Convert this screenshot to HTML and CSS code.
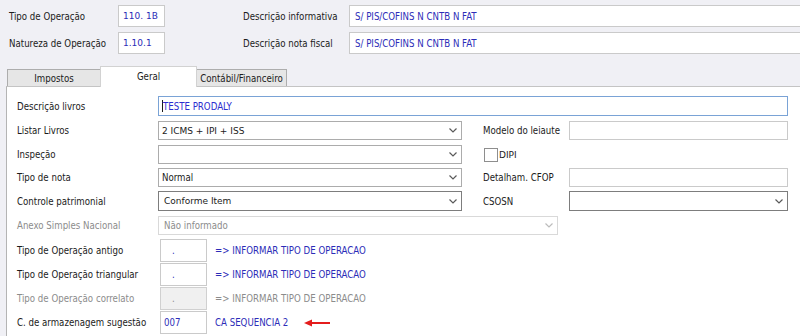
FILE: index.html
```html
<!DOCTYPE html>
<html lang="pt">
<head>
<meta charset="utf-8">
<title>Tipo de Operação</title>
<link rel="stylesheet" href="styles.css">
</head>
<body>
<div class="head">
  <div class="hrow">
    <span class="hlabel">Tipo de Operação</span>
    <div class="field code">110. 1B</div>
    <span class="hlabel2">Descrição informativa</span>
    <div class="field wide">S/ PIS/COFINS N CNTB N FAT</div>
  </div>
  <div class="hrow">
    <span class="hlabel">Natureza de Operação</span>
    <div class="field code">1.10.1</div>
    <span class="hlabel2">Descrição nota fiscal</span>
    <div class="field wide">S/ PIS/COFINS N CNTB N FAT</div>
  </div>
</div>

<div class="tabs">
  <div class="tab t1">Impostos</div>
  <div class="tab t2 active">Geral</div>
  <div class="tab t3">Contábil/Financeiro</div>
</div>

<div class="panel">
  <div class="row r1">
    <span class="lbl">Descrição livros</span>
    <div class="field focus full"><span class="caret"></span>TESTE PRODALY</div>
  </div>
  <div class="row r2">
    <span class="lbl">Listar Livros</span>
    <div class="select"><span class="alt">2 ICMS + IPI + ISS</span><svg class="chev" width="8" height="5" viewBox="0 0 8 5"><path d="M0.5 0.5 L4 4 L7.5 0.5" fill="none" stroke="#5a5a5a" stroke-width="1.2"/></svg></div>
    <span></span>
    <span class="lbl">Modelo do leiaute</span>
    <div class="field plain"></div>
  </div>
  <div class="row r3">
    <span class="lbl">Inspeção</span>
    <div class="select"><span></span><svg class="chev" width="8" height="5" viewBox="0 0 8 5"><path d="M0.5 0.5 L4 4 L7.5 0.5" fill="none" stroke="#5a5a5a" stroke-width="1.2"/></svg></div>
    <span></span>
    <label class="check"><span class="box"></span><span class="alt">DIPI</span></label>
  </div>
  <div class="row r4">
    <span class="lbl">Tipo de nota</span>
    <div class="select"><span>Normal</span><svg class="chev" width="8" height="5" viewBox="0 0 8 5"><path d="M0.5 0.5 L4 4 L7.5 0.5" fill="none" stroke="#5a5a5a" stroke-width="1.2"/></svg></div>
    <span></span>
    <span class="lbl">Detalham. CFOP</span>
    <div class="field plain"></div>
  </div>
  <div class="row r5">
    <span class="lbl">Controle patrimonial</span>
    <div class="select dark"><span class="alt">Conforme Item</span><svg class="chev" width="8" height="5" viewBox="0 0 8 5"><path d="M0.5 0.5 L4 4 L7.5 0.5" fill="none" stroke="#5a5a5a" stroke-width="1.2"/></svg></div>
    <span></span>
    <span class="lbl">CSOSN</span>
    <div class="select dark"><span></span><svg class="chev" width="8" height="5" viewBox="0 0 8 5"><path d="M0.5 0.5 L4 4 L7.5 0.5" fill="none" stroke="#5a5a5a" stroke-width="1.2"/></svg></div>
  </div>
  <div class="row r6">
    <span class="lbl muted">Anexo Simples Nacional</span>
    <div class="select disabled wide-select"><span>Não informado</span><svg class="chev" width="8" height="5" viewBox="0 0 8 5"><path d="M0.5 0.5 L4 4 L7.5 0.5" fill="none" stroke="#bcbcbc" stroke-width="1.2"/></svg></div>
  </div>
  <div class="row op">
    <span class="lbl">Tipo de Operação antigo</span>
    <div class="field small">.</div>
    <span class="info">=&gt; INFORMAR TIPO DE OPERACAO</span>
  </div>
  <div class="row op">
    <span class="lbl">Tipo de Operação triangular</span>
    <div class="field small">.</div>
    <span class="info">=&gt; INFORMAR TIPO DE OPERACAO</span>
  </div>
  <div class="row op">
    <span class="lbl muted">Tipo de Operação correlato</span>
    <div class="field small off">.</div>
    <span class="info muted">=&gt; INFORMAR TIPO DE OPERACAO</span>
  </div>
  <div class="row op">
    <span class="lbl">C. de armazenagem sugestão</span>
    <div class="field small num">007</div>
    <span class="info">CA SEQUENCIA 2<svg class="arrow" width="27" height="8" viewBox="0 0 27 8"><path d="M0 4 L8 0.5 L8 7.5 Z" fill="#e41c1c"/><rect x="7" y="3" width="19" height="2" fill="#e41c1c"/></svg></span>
  </div>
</div>
</body>
</html>
```

FILE: styles.css
```css
* { box-sizing: border-box; }
html, body { margin: 0; padding: 0; }
body {
  width: 800px;
  height: 336px;
  overflow: hidden;
  background: #f0f0f5;
  font-family: "DejaVu Sans Condensed", "DejaVu Sans", sans-serif;
  font-stretch: condensed;
  font-size: 9.6px;
  color: #1b1b1b;
}

/* header */
.head {
  padding: 5px 0 0 9px;
  display: flex;
  flex-direction: column;
  gap: 5px;
}
.hrow {
  display: flex;
  align-items: center;
  height: 22px;
}
.hlabel { width: 109px; }
.hlabel2 { width: 106px; margin-left: 78px; }

.field {
  height: 100%;
  background: #fff;
  border: 1px solid #cacaca;
  display: flex;
  align-items: center;
  padding-left: 4px;
  color: #2c2cb8;
  white-space: nowrap;
}
.hrow .field { height: 22px; }
.code {
  width: 47px;
  font-family: "DejaVu Sans", sans-serif;
  font-stretch: normal;
  font-size: 9px;
}
.wide { flex: 1; margin-right: -2px; padding-left: 5px; }

/* tabs */
.tabs {
  margin-top: 12px;
  padding-left: 7px;
  height: 20px;
  display: flex;
  align-items: flex-end;
}
.tab {
  height: 17px;
  display: flex;
  align-items: center;
  justify-content: center;
  background: #e6e6e6;
  border: 1px solid #adadad;
  border-bottom: none;
  color: #1b1b1b;
}
.t1 { width: 93px; }
.t2 { width: 97px; }
.t3 { width: 90px; }
.t1 { border-right: none; }
.t3 { border-left: none; }
.tab.active {
  height: 21px;
  margin-bottom: -1px;
  background: #fff;
  border-color: #d2d2d2;
  padding-bottom: 2px;
  position: relative;
  z-index: 1;
}

/* panel */
.panel {
  margin-left: 6px;
  height: 260px;
  background: #fff;
  border-top: 1px solid #c4c4c4;
  border-left: 1px solid #b4b4b4;
  padding: 9px 0 0 10px;
}
.row {
  display: grid;
  grid-template-columns: 141px 304px 21px 86px 219px;
  align-items: center;
}
.row > * { height: 100%; }
.lbl { display: flex; align-items: center; white-space: nowrap; }
.muted { color: #8c8c8c; }

.r1 { height: 20px; margin-bottom: 5px; }
.r2 { height: 19px; margin-bottom: 5px; }
.r3 { height: 19px; margin-bottom: 4px; }
.r4 { height: 19px; margin-bottom: 4px; }
.r5 { height: 20px; margin-bottom: 5px; }
.r6 { height: 19px; margin-bottom: 4px; }

.full { grid-column: 2 / 6; }
.focus {
  border-color: #7aa3d6;
  color: #2c2cd0;
  padding-left: 3px;
}
.caret {
  width: 1px;
  height: 12px;
  background: #1b1b1b;
  margin-right: 0;
}
.plain { padding: 0; }

.select {
  background: #fff;
  border: 1px solid #acacac;
  display: flex;
  align-items: center;
  justify-content: space-between;
  padding: 0 4px 0 3px;
  white-space: nowrap;
}
.select.dark { border-color: #7d7d7d; padding-left: 5px; }
.select.disabled {
  border-color: #d9d9d9;
  color: #8c8c8c;
  padding-left: 5px;
}
.wide-select { grid-column: 2 / 6; width: 400px; }
.chev { flex: none; }

.alt {
  font-family: "DejaVu Sans", sans-serif;
  font-stretch: normal;
  font-size: 9px;
  color: #1b1b1b;
}

.check {
  grid-column: 4 / 6;
  display: flex;
  align-items: center;
  padding-left: 1px;
}
.check .box {
  width: 14px;
  height: 14px;
  border: 1px solid #8e8e8e;
  background: #fff;
  margin-right: 1px;
}

/* operation rows */
.row.op {
  grid-template-columns: 143px 47px auto;
  height: 23px;
  margin-bottom: 1px;
}
.small {
  padding-left: 11px;
  color: #2c2cb8;
}
.small.off { background: #f0f0f0; border-color: #d0d0d0; color: #8c8c8c; }
.small.num { padding-left: 3px; }
.info {
  display: flex;
  align-items: center;
  padding-left: 8px;
  color: #2c2cb8;
  white-space: nowrap;
}
.info.muted { color: #8c8c8c; }
.arrow { margin-left: 16px; }
```
